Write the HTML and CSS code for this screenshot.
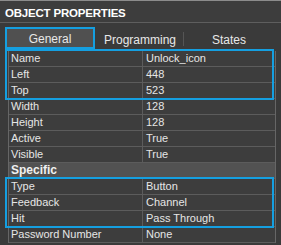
FILE: index.html
```html
<!DOCTYPE html>
<html>
<head lang="en">
    <meta charset="UTF-8">
    <title>Object Properties</title>
    <link rel="stylesheet" href="styles.css">
</head>
<body>
<div id="panel">
    <div id="title">OBJECT PROPERTIES</div>
    <ul id="tabs">
        <li class="selected">General</li>
        <li class="middle">Programming</li>
        <li class="last">States</li>
    </ul>
    <div id="grid">
        <div class="group">
            <div class="row"><span>Name</span><span>Unlock_icon</span></div>
            <div class="row"><span>Left</span><span>448</span></div>
            <div class="row"><span>Top</span><span>523</span></div>
        </div>
        <div class="row"><span>Width</span><span>128</span></div>
        <div class="row"><span>Height</span><span>128</span></div>
        <div class="row"><span>Active</span><span>True</span></div>
        <div class="row"><span>Visible</span><span>True</span></div>
        <div class="section">Specific</div>
        <div class="group">
            <div class="row"><span>Type</span><span>Button</span></div>
            <div class="row"><span>Feedback</span><span>Channel</span></div>
            <div class="row"><span>Hit</span><span>Pass Through</span></div>
        </div>
        <div class="row"><span>Password Number</span><span>None</span></div>
    </div>
</div>
</body>
</html>
```

FILE: styles.css
```css
*{
    margin: 0;
    padding: 0;
}
li{
    list-style: none;
}
body{
    background: #3a3a3a;
    font-family: "Liberation Sans", Arial, sans-serif;
    font-size: 11px;
    color: #e6e6e6;
}
#panel{
    width: 281px;
    height: 245px;
    background: #3a3a3a;
    border-top: 1px solid #8c8c8c;
    box-sizing: border-box;
}
#title{
    height: 21px;
    line-height: 24px;
    padding-left: 5px;
    font-weight: bold;
    font-size: 11.5px;
    letter-spacing: -0.2px;
    color: #ffffff;
    background: #3d3d3d;
    border-bottom: 1px solid #5e5e5e;
}
#tabs{
    display: flex;
    height: 24px;
    padding: 4px 0 0 5px;
}
#tabs li{
    text-align: center;
    font-size: 12px;
    color: #e8e8e8;
}
#tabs li.selected{
    width: 86px;
    height: 18px;
    line-height: 20px;
    background: #505050;
    border: 2px solid #159fe0;
    margin-right: 2px;
}
#tabs li.middle{
    width: 86px;
    line-height: 26px;
}
#tabs li.last{
    width: 90px;
    border-left: 1px solid #555555;
    height: 14px;
    line-height: 17px;
    margin-top: 5px;
}
#grid{
    margin-left: 8px;
    width: 266px;
    border-left: 1px solid #666666;
    border-right: 1px solid #666666;
    background: #3d3d3d;
}
.group{
    position: relative;
}
.group:after{
    content: "";
    position: absolute;
    left: -4px;
    right: 1px;
    top: -2px;
    bottom: -1px;
    border: 2px solid #159fe0;
}
.row{
    display: flex;
    height: 15px;
    line-height: 15px;
    border-bottom: 1px solid #5c5c5c;
}
.row span:first-child{
    width: 131px;
    padding-left: 2px;
    border-right: 1px solid #5c5c5c;
}
.row span:last-child{
    padding-left: 3px;
}
.section{
    height: 15px;
    line-height: 15px;
    padding-left: 2px;
    font-weight: bold;
    font-size: 12px;
    color: #f0f0f0;
    background: #525252;
    border-bottom: 1px solid #5c5c5c;
}
```
